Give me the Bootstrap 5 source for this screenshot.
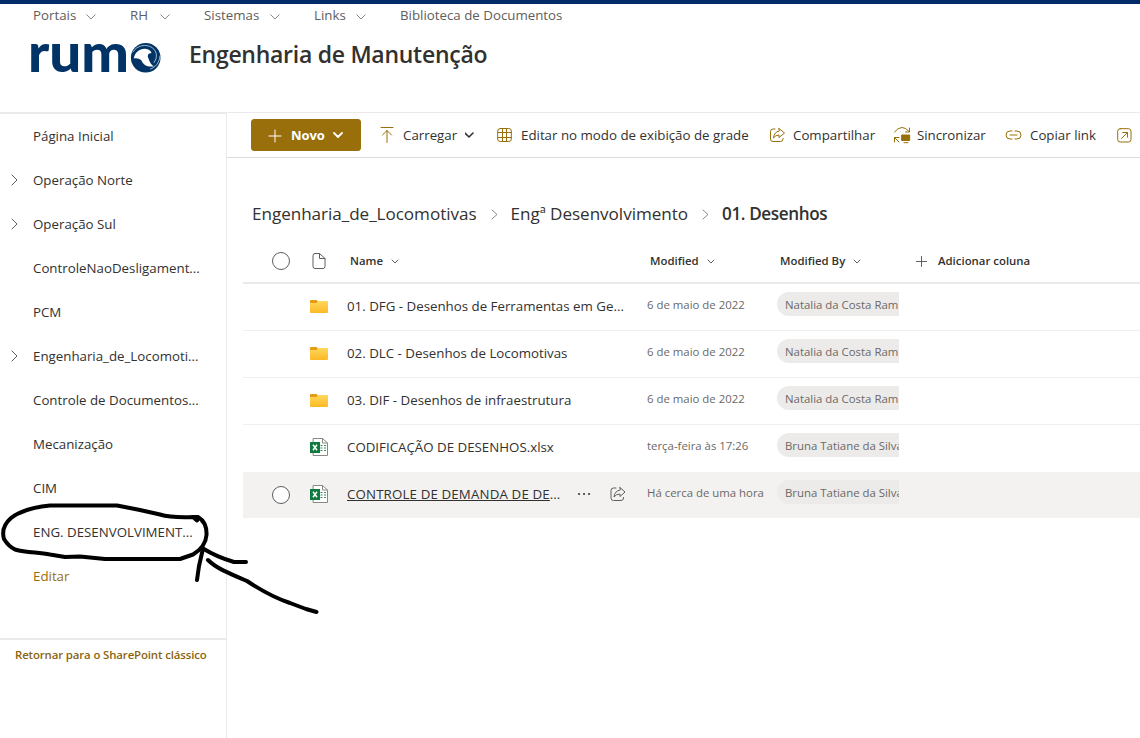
<!DOCTYPE html>
<html lang="pt-BR">
<head>
<meta charset="utf-8">
<meta name="viewport" content="width=device-width, initial-scale=1">
<title>Engenharia de Manutenção</title>
<link href="https://cdn.jsdelivr.net/npm/bootstrap@5.3.0/dist/css/bootstrap.min.css" rel="stylesheet">
<style>
:root{--gold:#986f0b;--ink:#323130;--soft:#605e5c;--rule:#eaeaea}
body{font-family:"Open Sans","Noto Sans",sans-serif;font-size:13.3px;line-height:20px;color:var(--ink);width:1140px;height:738px;overflow:hidden;background:#fff}
svg{display:block;flex:none;fill:none;stroke:currentColor;stroke-linecap:round;stroke-linejoin:round}
a{color:inherit;text-decoration:none}
.shell{height:738px}
.site-head{height:112px;border-top:4px solid #002b68}
.hub-nav{height:22px;padding-left:33px;gap:34px;color:var(--soft)}
.hub-nav a{display:flex;justify-content:space-between;align-items:center;white-space:nowrap}
.hub-nav svg{margin-top:3px;color:#8a8886}
.w-a{width:63px}.w-b{width:40px}.w-c{width:76px}.w-d{width:52px}
.site-brand{padding-left:30px;height:58px}
.site-brand svg{margin-top:6px}
.site-title{font-size:23px;line-height:32px;font-weight:600;margin:0 0 2px 28px;letter-spacing:-.27px}
.side{width:227px;border-right:1px solid var(--rule)}
.side-list{height:528px;border-top:2px solid var(--rule);border-bottom:2px solid var(--rule)}
.side-list a{display:flex;align-items:center;height:44px;padding-left:9px;white-space:nowrap}
.side-list .slot{width:24px;color:#605e5c}
.side-foot{font-size:11.4px;font-weight:600;color:#8a6410;padding:5px 0 0 15px;white-space:nowrap;letter-spacing:-.12px}
.gold{color:var(--gold)}
.pane{min-width:0;border-top:1px solid var(--rule);overflow:hidden}
.tools{display:grid;grid-template-columns:128px 118px 272px 124px 112px 112px 30px;height:45px;padding-left:24px;border-bottom:1px solid #dcdcdc;align-items:center;white-space:nowrap}
.tools svg.ico{color:var(--gold)}
.btn-new{--bs-btn-bg:#986f0b;--bs-btn-color:#fff;--bs-btn-border-color:#986f0b;--bs-btn-font-weight:700;--bs-btn-font-size:13px;--bs-btn-border-radius:3px;--bs-btn-padding-y:0;--bs-btn-padding-x:0;width:110px;height:32px;padding:1px 0 0 16px;display:flex;align-items:center}
.btn-new .label{margin-left:9px;letter-spacing:-.1px}
.sync-label{margin-left:6px;letter-spacing:-.05px}
.crumbs{font-size:17.1px;line-height:24px;padding:44px 0 0 25px;white-space:nowrap;letter-spacing:-.04px}
.crumbs svg{margin:0 13px 0 14px;color:#8a8886}
.crumbs .here{letter-spacing:-.37px}
.files{margin-left:16px}
.file-row{display:grid;grid-template-columns:66px 38px 300px 130px 122px 1fr;height:47px;border-bottom:1px solid #f0efee;align-items:center;white-space:nowrap}
.file-head{height:46px;margin-top:12px;border-bottom:2px solid var(--rule);font-size:11.4px;font-weight:600;padding-top:2px}
.file-head .cell{padding-left:3px;display:flex;align-items:center}
.file-head .cell svg{margin-left:8px;color:#605e5c}
.file-row.no-rule{border-bottom-color:transparent}
.file-row.active{background:#f3f2f1;height:46px;border:0}
.pick{width:18px;height:18px;border:1px solid #605e5c;border-radius:50%;margin-left:29px;background:#fff}
.when{font-size:11.4px;color:#6b6967;padding-bottom:5px}
.who{overflow:hidden;font-size:11.4px;color:#6b6967;padding-bottom:6px}
.who span{display:block;height:24px;line-height:25px;width:150px;border-radius:12px;background:#edebe9;padding-left:8px}
.fname{padding-bottom:2px}
.active .fname a{letter-spacing:.14px}
.row-tools{gap:19px;margin-right:21px}
.pen{position:absolute;left:0;top:495px;stroke:#000;pointer-events:none}
</style>
</head>
<body>
<div class="shell d-flex flex-column position-relative">
  <header class="site-head">
    <nav class="hub-nav d-flex align-items-center">
      <a href="#" class="w-a">Portais<svg width="10" height="6"><path d="M.8.8 5 5 9.2.8"/></svg></a>
      <a href="#" class="w-b">RH<svg width="10" height="6"><path d="M.8.8 5 5 9.2.8"/></svg></a>
      <a href="#" class="w-c">Sistemas<svg width="10" height="6"><path d="M.8.8 5 5 9.2.8"/></svg></a>
      <a href="#" class="w-d">Links<svg width="10" height="6"><path d="M.8.8 5 5 9.2.8"/></svg></a>
      <a href="#">Biblioteca de Documentos</a>
    </nav>
    <div class="site-brand d-flex align-items-center">
      <svg width="131" height="36" viewBox="30 40 131 36" aria-label="rumo">
        <text x="28" y="71.6" textLength="101" lengthAdjust="spacingAndGlyphs" font-family="Lato" font-weight="900" font-size="53" fill="#013366" stroke="none">rum</text>
        <circle cx="145.700" cy="57.800" r="14.800" fill="#013366" stroke="none"/>
        <path d="M133.800 58.500C134.500 52.500 140 48.500 145 48.800C149 49 151 51 151.500 53C148 53 147 56 148.500 58.500C149.500 61 150 64 154 66.300C148 67.500 143 65 141.500 60.500C139.500 58.500 136.500 58 133.800 58.500Z" fill="#fff" stroke="none"/>
        <path d="M133 52C137 45 146 43.800 152 47.500C157.500 51.500 157.500 58 154 62.500M160 56C159.500 63 155 67.500 150.500 69" stroke="#cbd8e5" stroke-width=".8"/>
      </svg>
      <h1 class="site-title">Engenharia de Manutenção</h1>
    </div>
  </header>

  <div class="d-flex flex-grow-1">
    <aside class="side flex-shrink-0">
      <nav class="side-list">
        <a href="#"><span class="slot"></span>Página Inicial</a>
        <a href="#"><span class="slot"><svg width="12" height="12"><path d="M3 1 8 6 3 11"/></svg></span>Operação Norte</a>
        <a href="#"><span class="slot"><svg width="12" height="12"><path d="M3 1 8 6 3 11"/></svg></span>Operação Sul</a>
        <a href="#"><span class="slot"></span>ControleNaoDesligament...</a>
        <a href="#"><span class="slot"></span>PCM</a>
        <a href="#"><span class="slot"><svg width="12" height="12"><path d="M3 1 8 6 3 11"/></svg></span>Engenharia_de_Locomoti...</a>
        <a href="#"><span class="slot"></span>Controle de Documentos...</a>
        <a href="#"><span class="slot"></span>Mecanização</a>
        <a href="#"><span class="slot"></span>CIM</a>
        <a href="#"><span class="slot"></span>ENG. DESENVOLVIMENT...</a>
        <a href="#" class="gold"><span class="slot"></span>Editar</a>
      </nav>
      <div class="side-foot"><a href="#">Retornar para o SharePoint clássico</a></div>
    </aside>

    <main class="pane flex-grow-1">
      <div class="tools">
        <button class="btn btn-new" type="button"><svg width="14" height="14"><path d="M7 1V13M1 7H13"/></svg><span class="label">Novo</span><svg class="ms-2" width="10" height="7" stroke-width="1.800"><path d="M1 1 5 5 9 1"/></svg></button>
        <div class="d-flex align-items-center"><svg class="ico" width="16" height="18"><path d="M2 1.500H14M8 16.500V4.500M3.500 9 8 4.500 12.500 9"/></svg><span class="ms-2">Carregar</span><svg class="ms-2" width="10" height="7" stroke-width="1.600"><path d="M0 1 4 5 8 1"/></svg></div>
        <div class="d-flex align-items-center"><svg class="ico" width="16" height="16"><rect x=".7" y="1.500" width="13.600" height="13" rx="2.500"/><path d="M5.500 1.500V14.500M9.500 1.500V14.500M1 5.500H14.500M1 10.500H14.500"/></svg><span class="ms-2">Editar no modo de exibição de grade</span></div>
        <div class="d-flex align-items-center"><svg class="ico" width="16" height="16"><path d="M6 2H4Q1.500 2 1.500 4.500V12Q1.500 14.500 4 14.500H11.500Q14 14.500 14 12V11.500M10 1.500 15.500 6 10 10.500V8Q6.500 8 4.500 11Q5 5 10 4Z"/></svg><span class="ms-2">Compartilhar</span></div>
        <div class="d-flex align-items-center"><svg class="ico" width="18" height="18"><path d="M1.500 6Q5 1.500 9 1.500 13 1.500 16 5.500M16.500 2V6H12.500M1.500 16V11.500H6M1.500 11.500 6 16"/><path d="M9 9H16.700V14.500H9ZM11 16.700H15" fill="currentColor"/></svg><span class="sync-label">Sincronizar</span></div>
        <div class="d-flex align-items-center"><svg class="ico" width="17" height="12"><path d="M7 2H5A4 4 0 0 0 5 10H7M10 2H12A4 4 0 0 1 12 10H10M5 6H12"/></svg><span class="ms-2">Copiar link</span></div>
        <svg class="ico" width="15" height="15"><rect x=".7" y=".7" width="13.300" height="13.300" rx="2.500"/><path d="M4.500 10.500 10.300 4.700M5.800 4.500H10.500V9.200"/></svg>
      </div>

      <div class="crumbs d-flex align-items-center">
        <a href="#">Engenharia_de_Locomotivas</a><svg width="7" height="11"><path d="M1 1 6 5.500 1 10"/></svg>
        <a href="#">Engª Desenvolvimento</a><svg width="7" height="11"><path d="M1 1 6 5.500 1 10"/></svg>
        <span class="fw-semibold here">01. Desenhos</span>
      </div>

      <div class="files">
        <div class="file-row file-head">
          <span class="pick"></span>
          <svg width="20" height="18"><path d="M6 1.500H10.500L16 6.500V14.500Q16 16.500 14 16.500H6Q4 16.500 4 14.500V3.500Q4 1.500 6 1.500ZM10.500 1.500V6.500H16" stroke="#605e5c"/></svg>
          <span class="cell">Name<svg width="8" height="5"><path d="M1 1 4 4 7 1"/></svg></span>
          <span class="cell">Modified<svg width="8" height="5"><path d="M1 1 4 4 7 1"/></svg></span>
          <span class="cell">Modified By<svg width="8" height="5"><path d="M1 1 4 4 7 1"/></svg></span>
          <span class="d-flex align-items-center ps-3"><svg class="me-2" width="15" height="11"><path d="M6.500.5V10.500M1.500 5.500H11.500" stroke="#605e5c"/></svg>Adicionar coluna</span>
        </div>

        <div class="file-row"><span></span><svg width="20" height="16"><use href="#folder"/></svg><a href="#" class="fname">01. DFG - Desenhos de Ferramentas em Ge...</a><span class="when">6 de maio de 2022</span><div class="who"><span>Natalia da Costa Ram</span></div></div>
        <div class="file-row"><span></span><svg width="20" height="16"><use href="#folder"/></svg><a href="#" class="fname">02. DLC - Desenhos de Locomotivas</a><span class="when">6 de maio de 2022</span><div class="who"><span>Natalia da Costa Ram</span></div></div>
        <div class="file-row"><span></span><svg width="20" height="16"><use href="#folder"/></svg><a href="#" class="fname">03. DIF - Desenhos de infraestrutura</a><span class="when">6 de maio de 2022</span><div class="who"><span>Natalia da Costa Ram</span></div></div>
        <div class="file-row no-rule"><span></span><svg width="20" height="20"><use href="#sheet"/></svg><a href="#" class="fname">CODIFICAÇÃO DE DESENHOS.xlsx</a><span class="when">terça-feira às 17:26</span><div class="who"><span>Bruna Tatiane da Silva</span></div></div>
        <div class="file-row active"><span class="pick"></span><svg width="20" height="20"><use href="#sheet"/></svg>
          <div class="d-flex align-items-center fname"><a href="#" class="text-decoration-underline">CONTROLE DE DEMANDA DE DE</a>...<div class="row-tools d-flex align-items-center ms-auto"><svg width="14" height="4"><path d="M2 2H2.100M7 2H7.100M12 2H12.100" stroke-width="2.200" stroke="#484644"/></svg><svg width="16" height="16"><path d="M6 2H3.500Q1 2 1 4.500V12Q1 14.500 3.500 14.500H11Q13.500 14.500 13.500 12V11.500M10 1.500 15 6 10 10.500V8Q6 8 4 11Q4.500 5 10 4Z" stroke="#605e5c"/></svg></div></div>
          <span class="when">Há cerca de uma hora</span><div class="who"><span>Bruna Tatiane da Silva</span></div></div>
      </div>
    </main>
  </div>

  <svg class="pen" width="330" height="125" viewBox="0 495 330 125" stroke-width="4">
    <path d="M197 520.500 193 517C180 517.500 170 517.500 160 514.500L140 510 117 505.500H50C35 507 20 511 11 518 3 525 2 532 4 539 7 544 10 547 15 549.500 27 553 38 552 50 554.500L65 557 80 556.500 105 559H180L193 554.500C202 549 206 543 206.500 535 207 525 203 520 198 517H193"/>
    <path d="M197 580 199 566 203 548.500C212 554 220 558 234 562H246M208 560C216 568 228 573 247 581 262 591 275 598 290 603L306 609 316.500 612"/>
  </svg>
</div>

<svg width="0" height="0" class="position-absolute">
  <defs>
    <linearGradient id="fg" x2="0" y2="1"><stop stop-color="#ffd75e"/><stop offset="1" stop-color="#fcb924"/></linearGradient>
    <symbol id="folder" viewBox="0 0 20 16"><path d="M1 2Q1 1 2 1H7.500L9 2.500V5H1Z" fill="#e59b12" stroke="none"/><path d="M1 4H7.500L9.500 2H18Q19 2 19 3V13Q19 14 18 14H2Q1 14 1 13Z" fill="url(#fg)" stroke="none"/></symbol>
    <symbol id="sheet" viewBox="0 0 20 20"><path d="M4.500 .5H13.500L18.500 5V17.500H4.500Z" fill="#fff" stroke="#8a8886"/><path d="M13.500 .5V5H18.500" stroke="#8a8886"/><path d="M11.500 7.500H13.500M15 7.500H17M11.500 10H13.500M15 10H17M11.500 12.500H13.500M15 12.500H17" stroke="#3b8b5c" stroke-linecap="butt"/><rect x="1" y="4" width="10" height="11" fill="#10793f" stroke="none"/><path d="M4 6.800 8 12.200M8 6.800 4 12.200" stroke="#fff" stroke-width="1.500" stroke-linecap="butt"/></symbol>
  </defs>
</svg>
<script src="https://cdn.jsdelivr.net/npm/bootstrap@5.3.0/dist/js/bootstrap.bundle.min.js"></script>
</body>
</html>
